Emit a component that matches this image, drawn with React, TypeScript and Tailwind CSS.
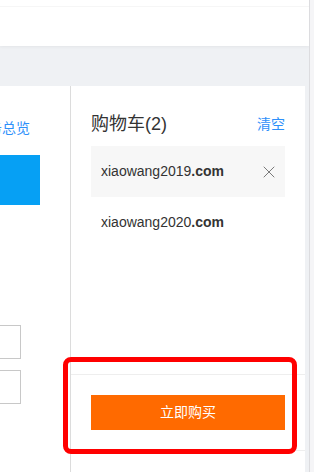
import { X } from "lucide-react";

const font = { fontFamily: '"Liberation Sans", "Noto Sans CJK SC", sans-serif' };

function CartItem({ name, active }: { name: string; active?: boolean }) {
  return (
    <div
      className={
        "flex h-[51px] items-center justify-between pl-[10px] pr-[6px] text-[14px] text-[#333] " +
        (active ? "bg-[#f7f7f7]" : "bg-white")
      }
    >
      <span>
        {name}
        <span className="font-bold">.com</span>
      </span>
      {active && <X className="h-[20px] w-[20px] text-[#7a7a7a]" strokeWidth={1.2} />}
    </div>
  );
}

export default function App() {
  return (
    <div className="relative flex h-[472px] w-[314px] overflow-hidden bg-white" style={font}>
      <div className="flex w-[309px] flex-col bg-[#eff1f4]">
        {/* header */}
        <div className="h-[46px] bg-white shadow-[0_1px_3px_rgba(0,0,0,0.05)]">
          <div className="h-[7px] border-b border-[#f6f6f6]" />
        </div>
        <div className="h-[40px]" />

        <div className="flex flex-1">
          {/* left panel (cut off) */}
          <div className="w-[71px] border-r border-[#dcdcdc] bg-white">
            <div className="mt-[32px] flex w-[30px] justify-end overflow-visible whitespace-nowrap text-[14px] leading-[20px] text-[#2e90fa]">
              业务总览
            </div>
            <div className="mt-[17px] h-[50px] w-[40px] bg-[#06a0f4]" />
            <div className="mt-[120px] h-[34px] w-[21px] border border-l-0 border-[#c8c8c8]" />
            <div className="mt-[11px] h-[34px] w-[21px] border border-l-0 border-[#c8c8c8]" />
          </div>

          {/* cart panel */}
          <div className="flex w-[234px] flex-col bg-white">
            <div className="px-[20px] pt-[26px]">
              <div className="flex h-[24px] items-center justify-between">
                <span className="text-[18px] text-[#333]">购物车(2)</span>
                <span className="text-[14px] text-[#2e90fa]">清空</span>
              </div>
              <div className="mt-[10px]">
                <CartItem name="xiaowang2019" active />
                <CartItem name="xiaowang2020" />
              </div>
            </div>
            <div className="flex-1" />
            <div className="border-y border-[#eeeeee] px-[20px] py-[20px]">
              <button className="flex h-[35px] w-full items-center justify-center bg-[#ff6a00] text-[14px] text-white">
                立即购买
              </button>
            </div>
            <div className="h-[21px]" />
          </div>
        </div>
      </div>
      <div className="w-[5px] border-l border-[#dcdcdf] bg-[#f5f5f7]" />

      {/* highlight annotation */}
      <div className="absolute left-[63px] top-[357px] h-[97px] w-[234px] rounded-[8px] border-[5px] border-[#ff0000]" />
    </div>
  );
}
